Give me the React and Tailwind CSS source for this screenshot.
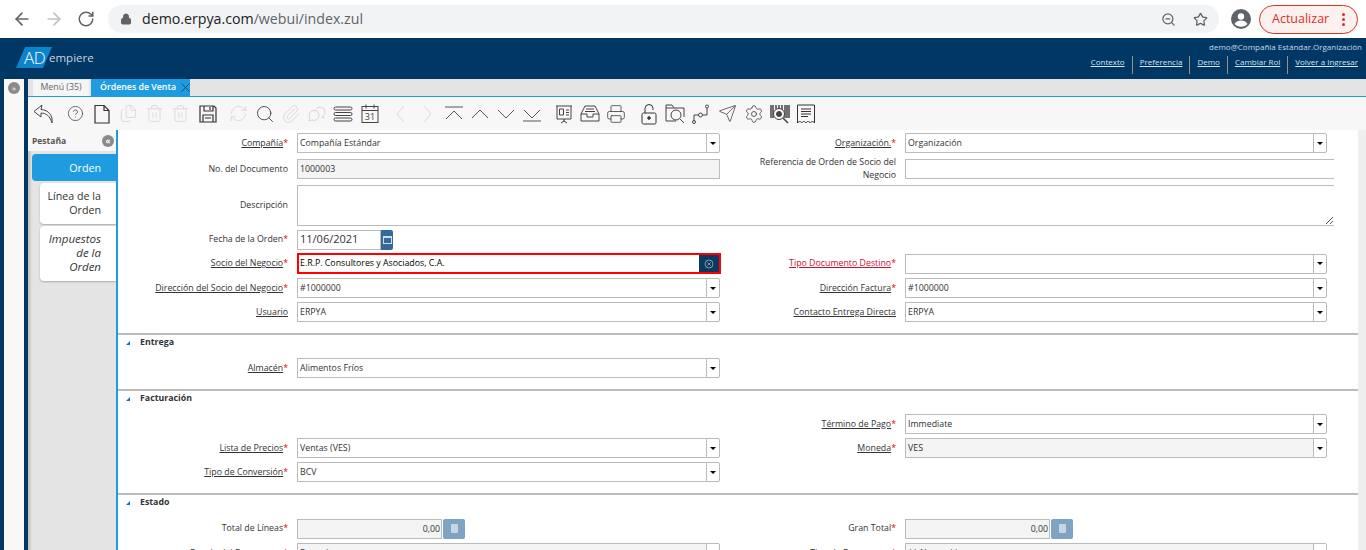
import React from "react";
import {
  ArrowLeft,
  ArrowRight,
  RotateCw,
  Lock,
  ZoomOut,
  Star,
  CircleHelp,
  Files,
  Trash2,
  RefreshCw,
  Search,
  Paperclip,
  Printer,
  Send,
  Settings,
  X,
} from "lucide-react";

const Svg = ({ children }) => (
  <svg width="22" height="22" viewBox="0 0 22 22" fill="none" stroke="currentColor" strokeWidth="1">
    {children}
  </svg>
);

const Reply = () => (
  <Svg>
    <path d="M9 2L1 8.500l7 5.500v-4c5 0 9 3 11 10 1-7-3-13-11-13.500z" strokeLinejoin="round" />
  </Svg>
);

const Page = () => (
  <Svg>
    <path d="M4 2.500h9l5 5v12.500H4zM13 2.500v5h5" strokeWidth="1.200" />
  </Svg>
);

const Floppy = () => (
  <Svg>
    <path d="M3 3h14l2 2v14H3zM7 3v5h9V3M13 4v3M6 19v-7h10v7M8 15h6" strokeWidth="1.200" />
  </Svg>
);

const Chat = () => (
  <Svg>
    <path d="M3 13a5 5 0 1 1 3 4l-3 1 1-3z" />
    <path d="M10 6a5 5 0 0 1 9 3c0 2-1 3-2 4l1 2-3-1" />
  </Svg>
);

const Lines = () => (
  <Svg>
    <rect x="2" y="4" width="18" height="3" rx="1.500" />
    <rect x="2" y="9.500" width="18" height="3" rx="1.500" />
    <rect x="2" y="15" width="18" height="3" rx="1.500" />
  </Svg>
);

const Cal = () => (
  <Svg>
    <rect x="3" y="3.500" width="16" height="16" />
    <path d="M3 7.500h16M7 1.500v4M15 1.500v4" />
    <text x="11" y="17" textAnchor="middle" fontSize="9" fill="currentColor" stroke="none">31</text>
  </Svg>
);

const Chev = ({ d }) => (
  <Svg>
    <path d={d} strokeWidth="0.900" />
  </Svg>
);

const Board = () => (
  <Svg>
    <path d="M3 3h16M4 3v13h14V3M11 16v3M8 20l3-2 3 2" />
    <path d="M6.500 6h4v6h-4zM13 7h3M13 9.500h3M13 12h3" />
  </Svg>
);

const Tray = () => (
  <Svg>
    <path d="M6 3h10l4 8v7H2v-7zM2 11h6v3h6v-3h6M7 6h8M6 8.500h10" />
  </Svg>
);

const Padlock = () => (
  <Svg>
    <rect x="4" y="10" width="14" height="11" rx="1.500" />
    <path d="M7 10V5.500a4 4 0 0 1 8 0V7" />
    <circle cx="11" cy="15" r="1.300" fill="currentColor" />
  </Svg>
);

const FolderSearch = () => (
  <Svg>
    <path d="M12 18H2V2h6l2 3h10v9M2 5h8" />
    <circle cx="12" cy="12" r="5" />
    <path d="M16 16l4 4" />
  </Svg>
);

const Route = () => (
  <Svg>
    <path d="M4 18v-6h4M13 12h4V5" />
    <circle cx="4" cy="19" r="1.500" />
    <circle cx="10.500" cy="12" r="2" />
    <circle cx="17" cy="3.500" r="1.500" />
  </Svg>
);

const Barcode = () => (
  <Svg>
    <path d="M2 2v13M4 2v13M7 2v4M10 2v4M13 2v6M16 2v13M18 2v13M20 2v13" strokeWidth="1.500" />
    <circle cx="10" cy="11" r="5.500" fill="#f7f7f7" />
    <circle cx="10" cy="11" r="2.500" fill="currentColor" />
    <path d="M14 15l5 5" strokeWidth="1.500" />
  </Svg>
);

const Report = () => (
  <Svg>
    <path d="M2.500 2h17v18c-1.500-2-3-2-4.200 0-1.300-2-3.200-2-4.300 0-1.300-2-3-2-4.300 0-1.300-2-2.700-2-4.200 0z" />
    <path d="M6 6h10M6 8.500h10M6 11h10M6 13.500h7" strokeWidth="1.200" />
  </Svg>
);

// margin on an icon starts a new toolbar group
const tools = [
  { icon: <Reply />, cls: "text-[#444]" },
  { icon: <CircleHelp size={17} strokeWidth={1} />, cls: "ml-[5px] text-[#333]" },
  { icon: <Page />, cls: "text-[#333]" },
  { icon: <Files size={19} strokeWidth={1} />, cls: "text-[#d4d4d4]" },
  { icon: <Trash2 size={19} strokeWidth={1} />, cls: "text-[#d4d4d4]" },
  { icon: <Trash2 size={19} strokeWidth={1} />, cls: "text-[#d4d4d4]" },
  { icon: <Floppy />, cls: "ml-[1px] text-[#333]" },
  { icon: <RefreshCw size={19} strokeWidth={1} />, cls: "ml-[4px] text-[#d4d4d4]" },
  { icon: <Search size={20} strokeWidth={1} />, cls: "text-[#333]" },
  { icon: <Paperclip size={20} strokeWidth={1} />, cls: "text-[#d4d4d4]" },
  { icon: <Chat />, cls: "text-[#d4d4d4]" },
  { icon: <Lines />, cls: "text-[#444]" },
  { icon: <Cal />, cls: "text-[#444]" },
  { icon: <Chev d="M14 3l-7 8 7 8" />, cls: "ml-[5px] text-[#d4d4d4]" },
  { icon: <Chev d="M8 3l7 8-7 8" />, cls: "text-[#d4d4d4]" },
  { icon: <Chev d="M2 4h18M3 16l8-8 8 8" />, cls: "text-[#444]" },
  { icon: <Chev d="M3 15l8-8 8 8" />, cls: "text-[#444]" },
  { icon: <Chev d="M3 7l8 8 8-8" />, cls: "text-[#444]" },
  { icon: <Chev d="M2 18h18M3 7l8 8 8-8" />, cls: "text-[#444]" },
  { icon: <Board />, cls: "ml-[5px] text-[#444]" },
  { icon: <Tray />, cls: "text-[#444]" },
  { icon: <Printer size={20} strokeWidth={1} />, cls: "text-[#444]" },
  { icon: <Padlock />, cls: "ml-[6px] text-[#333]" },
  { icon: <FolderSearch />, cls: "text-[#444]" },
  { icon: <Route />, cls: "text-[#444]" },
  { icon: <Send size={19} strokeWidth={1} />, cls: "text-[#444]" },
  { icon: <Settings size={20} strokeWidth={1} />, cls: "text-[#444]" },
  { icon: <Barcode />, cls: "text-[#444]" },
  { icon: <Report />, cls: "text-[#333]" },
];

const links = ["Contexto", "Preferencia", "Demo", "Cambiar Rol", "Volver a Ingresar"];

const BrowserBar = () => (
  <div className="h-[38px] bg-white flex items-center pl-[12px]">
    <ArrowLeft size={20} className="text-[#5f6368]" />
    <ArrowRight size={20} className="ml-[12px] text-[#bdc1c6]" />
    <RotateCw size={18} className="ml-[13px] text-[#5f6368]" />
    <div className="ml-[13px] w-[1111px] h-[28px] rounded-full bg-[#f1f3f4] flex items-center pl-[12px] pr-[10px]">
      <Lock size={12} className="text-[#5f6368]" fill="#5f6368" />
      <span className="ml-[10px] text-[14.200px] text-[#202124]">
        demo.erpya.com<span className="text-[#5f6368]">/webui/index.zul</span>
      </span>
      <ZoomOut size={15} className="ml-auto text-[#5f6368]" />
      <Star size={15} className="ml-[17px] mr-[1px] text-[#5f6368]" />
    </div>
    <svg className="ml-[12px]" width="20" height="20" viewBox="0 0 20 20">
      <circle cx="10" cy="10" r="10" fill="#5f6368" />
      <circle cx="10" cy="7.500" r="3.200" fill="#fff" />
      <path d="M3.500 15c1.500-3 4-3.500 6.500-3.500s5 .5 6.500 3.500c-3 3.500-10 3.500-13 0z" fill="#fff" />
    </svg>
    <div className="ml-[8px] w-[99px] h-[29px] rounded-full border border-[#d93025] bg-[#fdf1f0] flex items-center pl-[12px] text-[12.500px] text-[#d93025]">
      Actualizar
      <span className="ml-auto mr-[12px] flex flex-col gap-[2px]">
        <i className="w-[3px] h-[3px] rounded-full bg-[#d93025]" />
        <i className="w-[3px] h-[3px] rounded-full bg-[#d93025]" />
        <i className="w-[3px] h-[3px] rounded-full bg-[#d93025]" />
      </span>
    </div>
  </div>
);

const AppHeader = () => (
  <div className="h-[41px] bg-[#003764] flex justify-between pl-[16px] pr-[4px]">
    <div className="flex items-center mt-[-2px]">
      <div className="w-[36px] h-[21px] bg-[#0b84c9] [clip-path:polygon(25%_0,100%_0,75%_100%,0_100%)] text-white text-[17px] font-light leading-[21px] pl-[8px] tracking-[-0.5px]">
        AD
      </div>
      <span className="ml-[-3px] text-[11.500px] text-[#c9d6e0]">empiere</span>
    </div>
    <div className="flex flex-col items-end pt-[3px]">
      <div className="text-[8px] leading-[11px] text-[#c6d9e8]">demo@Compañía Estándar.Organización</div>
      <div className="flex mt-[4px] mr-[4px] h-[18px] items-center">
        {links.map((l, i) => (
          <div key={l} className="flex items-center h-[18px]">
            {i > 0 && <div className="w-px h-[18px] bg-[#9c8f7c] mx-[7px]" />}
            <span className="mb-[6px] text-[8px] underline text-[#d5e4f0]">{l}</span>
          </div>
        ))}
      </div>
    </div>
  </div>
);

const Combo = ({ value, disabled }) => (
  <div className="relative w-full">
    <div className={`h-[20px] w-[410px] border border-[#bbb] flex items-center pl-[2px] pt-[2px] ${disabled ? "bg-[#f4f4f4]" : "bg-white"}`}>
      {value}
    </div>
    <div className="absolute right-0 top-0 w-[14px] h-[20px] border border-[#bbb] rounded-r-[2px] bg-white flex items-center justify-center">
      <i className="w-0 h-0 border-x-[3px] border-x-transparent border-t-[3px] border-t-black" />
    </div>
  </div>
);

const Text = ({ value = "", disabled, cls = "w-[423px]" }) => (
  <div className={`h-[20px] border border-[#bbb] flex items-center pl-[2px] pt-[2px] ${cls} ${disabled ? "bg-[#f4f4f4]" : "bg-white"}`}>
    {value}
  </div>
);

const Amount = () => (
  <div className="flex items-center">
    <div className="w-[145px] h-[20px] border border-[#bbb] bg-[#f4f4f4] flex items-center justify-end pr-[1px] pt-[2px]">0,00</div>
    <div className="ml-[1px] w-[22px] h-[20px] rounded-[2px] bg-[#7fa3c2] flex items-center justify-center">
      <i className="w-[7px] h-[9px] bg-[#c5d6e4] rounded-[1px]" />
    </div>
  </div>
);

const Label = ({ text, link, req, red, w = "w-[170px]", pad = "" }) => (
  <div className={`${w} ${pad} text-right leading-[13px] shrink-0 ${red ? "text-[#c8102e]" : ""}`}>
    <span className={link ? "underline" : ""}>{text}</span>
    {req && <span className="text-[#e00]">*</span>}
  </div>
);

const Row = ({ h = "h-[24px]", left, leftField, right, rightField }) => (
  <div className={`${h} flex items-center`}>
    {left ? <Label {...left} /> : <div className="w-[170px] shrink-0" />}
    <div className="ml-[9px] w-[423px] shrink-0">{leftField}</div>
    {right && <Label {...right} w="w-[176px]" />}
    {right && <div className="ml-[9px] w-[422px] shrink-0">{rightField}</div>}
  </div>
);

const SectionHead = ({ title }) => (
  <>
    <div className="h-[15px] flex items-center pl-[8px] font-bold">
      <i className="w-0 h-0 border-l-[4px] border-l-transparent border-b-[4px] border-b-[#1b6fc2]" />
      <span className="ml-[10px]">{title}</span>
    </div>
    <div className="h-[6px]" />
  </>
);

const SideTabs = () => (
  <div className="w-[88px] shrink-0 bg-[#e4e4e4] shadow-[inset_3px_0_3px_-1px_#bbb] text-[10.700px] leading-[14px] text-[#333]">
    <div className="h-[21px] bg-[#f7f7f7] flex items-center justify-between pl-[4px] pr-[2px] text-[8.500px] font-bold text-[#555]">
      Pestaña
      <span className="w-[12px] h-[12px] rounded-full bg-[#8a8a8a] text-white text-[8px] leading-[11px] text-center">«</span>
    </div>
    <div className="mt-[3px] ml-[4px] h-[27px] rounded-l-[4px] bg-[#1f9ce0] text-white flex items-center justify-end pr-[15px]">
      Orden
    </div>
    <div className="mt-[2px] ml-[12px] h-[41px] rounded-l-[4px] bg-white text-right pr-[15px] pt-[6px] shadow-[0_1px_2px_#aaa]">
      Línea de la Orden
    </div>
    <div className="mt-[2px] ml-[12px] h-[55px] rounded-l-[4px] bg-white text-right text-[11.500px] pl-[6px] pr-[15px] pt-[6px] italic shadow-[0_1px_2px_#aaa]">
      Impuestos de la Orden
    </div>
  </div>
);

const Form = () => (
  <div className="w-[1242px] shrink-0 bg-white border-l-2 border-[#1f9ce0] text-[8.800px] text-[#333]">
    <Row
      h="h-[26px]"
      left={{ text: "Compañía", link: true, req: true }}
      leftField={<Combo value="Compañía Estándar" />}
      right={{ text: "Organización.", link: true, req: true }}
      rightField={<Combo value="Organización" />}
    />
    <Row
      h="h-[26px]"
      left={{ text: "No. del Documento" }}
      leftField={<Text value="1000003" disabled />}
      right={{ text: "Referencia de Orden de Socio del Negocio", pad: "pl-[36px]" }}
      rightField={<Text cls="w-[429px] border-r-0" />}
    />
    <div className="h-[46px] flex items-center">
      <Label text="Descripción" />
      <div className="relative ml-[9px] w-[1037px] h-[41px] border border-[#bbb] border-r-0">
        <svg className="absolute right-[1px] bottom-[1px]" width="8" height="8" stroke="#555" strokeWidth="1">
          <path d="M1 8L8 1M5 8L8 5" />
        </svg>
      </div>
    </div>
    <Row
      h="h-[23px]"
      left={{ text: "Fecha de la Orden", req: true }}
      leftField={
        <div className="flex items-center">
          <div className="w-[84px] h-[20px] border border-[#bbb] flex items-center pl-[2px] text-[11px]">11/06/2021</div>
          <div className="w-[12px] h-[20px] bg-[#336a99] rounded-r-[2px] flex items-center justify-center">
            <i className="w-[9px] h-[8px] border border-[#cfe0ee] border-t-2" />
          </div>
        </div>
      }
    />
    <Row
      h="h-[25px]"
      left={{ text: "Socio del Negocio", link: true, req: true }}
      leftField={
        <div className="h-[21px] w-[424px] border-2 border-[#f00] flex items-center justify-between pl-[1px] text-black">
          E.R.P. Consultores y Asociados, C.A.
          <span className="w-[20px] h-full bg-[#0d3a60] flex items-center justify-center">
            <svg width="10" height="10" viewBox="0 0 10 10" fill="none" stroke="#7d9ab3">
              <circle cx="5" cy="5" r="4" />
              <path d="M3.500 3.500l3 3M6.500 3.500l-3 3" />
            </svg>
          </span>
        </div>
      }
      right={{ text: "Tipo Documento Destino", link: true, req: true, red: true }}
      rightField={<Combo value="" />}
    />
    <Row
      left={{ text: "Dirección del Socio del Negocio", link: true, req: true }}
      leftField={<Combo value="#1000000" />}
      right={{ text: "Dirección Factura", link: true, req: true }}
      rightField={<Combo value="#1000000" />}
    />
    <Row
      left={{ text: "Usuario", link: true }}
      leftField={<Combo value="ERPYA" />}
      right={{ text: "Contacto Entrega Directa", link: true }}
      rightField={<Combo value="ERPYA" />}
    />
    <div className="h-[9px]" />
    <div className="h-[56px] border-t-2 border-[#bbb]">
      <SectionHead title="Entrega" />
      <Row left={{ text: "Almacén", link: true, req: true }} leftField={<Combo value="Alimentos Fríos" />} />
    </div>
    <div className="h-[104px] border-t-2 border-[#bbb]">
      <SectionHead title="Facturación" />
      <Row
        right={{ text: "Término de Pago", link: true, req: true }}
        rightField={<Combo value="Immediate" />}
      />
      <Row
        left={{ text: "Lista de Precios", link: true, req: true }}
        leftField={<Combo value="Ventas (VES)" />}
        right={{ text: "Moneda", link: true, req: true }}
        rightField={<Combo value="VES" disabled />}
      />
      <Row left={{ text: "Tipo de Conversión", link: true, req: true }} leftField={<Combo value="BCV" />} />
    </div>
    <div className="border-t-2 border-[#bbb]">
      <SectionHead title="Estado" />
      <Row
        h="h-[25px]"
        left={{ text: "Total de Líneas", req: true }}
        leftField={<Amount />}
        right={{ text: "Gran Total", req: true }}
        rightField={<Amount />}
      />
      <Row
        left={{ text: "Estado del Documento", req: true }}
        leftField={<Combo value="Borrador" disabled />}
        right={{ text: "Tipo de Documento", req: true }}
        rightField={<Combo value="** Nuevo **" disabled />}
      />
    </div>
  </div>
);

export default function App() {
  return (
    <div className="w-[1366px] h-[550px] overflow-hidden bg-[#eeeeee] font-['Open_Sans',sans-serif]">
      <BrowserBar />
      <AppHeader />
      <div className="flex h-[471px]">
        <div className="w-[4px] bg-[#003764]" />
        <div className="w-[20px] bg-[#f8f8f8] flex justify-center pt-[3px]">
          <span className="w-[12px] h-[12px] rounded-full bg-[#8a8a8a] text-white text-[8px] leading-[11px] text-center">»</span>
        </div>
        <div className="w-[4px] bg-[#003764]" />
        <div className="flex-1 min-w-0">
          <div className="h-[18px] bg-[#e4e4e4] border-b border-[#1f9ce0] flex items-end pl-[5px] text-[8.800px]">
            <div className="w-[56px] h-[16px] bg-[#f5f5f5] text-[#666] flex items-center justify-center">Menú (35)</div>
            <div className="ml-[2px] w-[99px] h-[17px] bg-[#1f9ce0] text-white font-semibold flex items-center pl-[9px] whitespace-nowrap">
              Órdenes de Venta
              <X size={15} strokeWidth={1} className="ml-[2px] shrink-0 text-[#123]" />
            </div>
          </div>
          <div className="h-[33px] bg-[#f7f7f7] flex items-center pl-[3px]">
            {tools.map((t, i) => (
              <div key={i} className={`w-[26.300px] flex items-center justify-center ${t.cls}`}>
                {t.icon}
              </div>
            ))}
          </div>
          <div className="flex">
            <SideTabs />
            <Form />
          </div>
        </div>
      </div>
    </div>
  );
}
